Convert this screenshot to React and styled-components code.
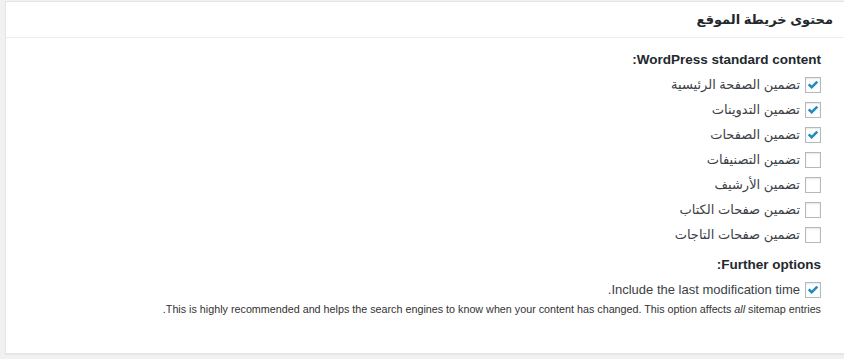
import styled, { createGlobalStyle } from "styled-components";

const Global = createGlobalStyle`
  html, body {
    margin: 0;
    padding: 0;
    background: #f1f1f1;
  }
  body {
    font-family: "Liberation Sans", "DejaVu Sans", sans-serif;
    color: #444;
  }
`;

const Page = styled.div`
  direction: rtl;
  padding: 1px 0 5px 5px;
`;

const Postbox = styled.section`
  background: #fff;
  border: 1px solid #e5e5e5;
  border-right: none;
  box-shadow: 0 1px 1px rgba(0, 0, 0, 0.04);
  height: 351px;
`;

const Header = styled.h2`
  margin: 0;
  height: 35px;
  padding: 0 11px;
  display: flex;
  align-items: center;
  font-size: 13px;
  font-weight: bold;
  color: #23282d;
  border-bottom: 1px solid #eee;
`;

const Inside = styled.div`
  padding: 13px 23px 0 12px;
`;

const Heading = styled.h4`
  margin: 0 0 ${(p) => p.gap || 0}px;
  font-size: 13.5px;
  line-height: 18px;
  font-weight: bold;
  color: #23282d;
`;

const List = styled.ul`
  list-style: none;
  margin: 0 0 ${(p) => p.after || 0}px;
  padding: 0;
`;

const Row = styled.li`
  height: 25px;
  display: flex;
  align-items: center;
  gap: 5px;
  font-size: 13px;
  color: #3c4146;
`;

const Box = styled.span`
  width: 14px;
  height: 14px;
  flex: none;
  border: 1px solid #b4b9be;
  background: #fff;
  box-shadow: inset 0 1px 2px rgba(0, 0, 0, 0.1);
  display: flex;
  align-items: center;
  justify-content: center;
`;

const Note = styled.p`
  margin: -1px 0 0;
  font-size: 10.75px;
  line-height: 16px;
  color: #333;
  em {
    font-style: italic;
  }
`;

const Check = () => (
  <svg width="12" height="10" viewBox="0 0 12 10">
    <path d="M0.8 5.2 L2.6 3.4 L4.7 5.5 L9.4 0.8 L11.2 2.6 L4.7 9.1 Z" fill="#1e8cbe" />
  </svg>
);

const Option = ({ label, checked }) => (
  <Row>
    <Box>{checked && <Check />}</Box>
    <span>{label}</span>
  </Row>
);

const standard = [
  ["تضمين الصفحة الرئيسية", true],
  ["تضمين التدوينات", true],
  ["تضمين الصفحات", true],
  ["تضمين التصنيفات", false],
  ["تضمين الأرشيف", false],
  ["تضمين صفحات الكتاب", false],
  ["تضمين صفحات التاجات", false],
];

export default function App() {
  return (
    <Page>
      <Global />
      <Postbox>
        <Header>محتوى خريطة الموقع</Header>
        <Inside>
          <Heading gap={3}>WordPress standard content:</Heading>
          <List after={9}>
            {standard.map(([label, checked]) => (
              <Option key={label} label={label} checked={checked} />
            ))}
          </List>
          <Heading gap={3}>Further options:</Heading>
          <List>
            <Option label="Include the last modification time." checked />
          </List>
          <Note>
            This is highly recommended and helps the search engines to know when your content has
            changed. This option affects <em>all</em> sitemap entries.
          </Note>
        </Inside>
      </Postbox>
    </Page>
  );
}
